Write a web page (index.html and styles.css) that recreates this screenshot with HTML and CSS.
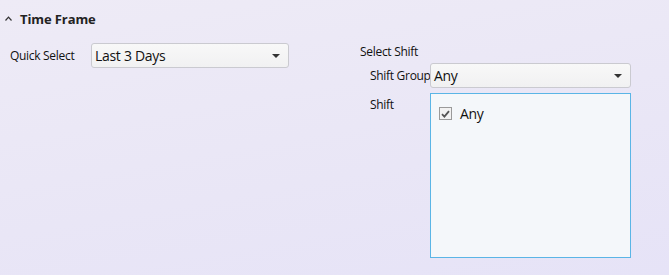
FILE: index.html
```html
<!DOCTYPE html>
<html>
  <head>
    <meta name="viewport" content="width=device-width, initial-scale=1.0" />
    <title>Time Frame</title>
    <link rel="stylesheet" href="styles.css">
  </head>

  <body>
    <div class="panel">
      <!-- header -->
      <div class="header">
        <span class="chevron">
          <svg width="7" height="5" viewBox="0 0 7 5"><path d="M0.5 4.5 L3.5 1.2 L6.5 4.5" fill="none" stroke="#333" stroke-width="1.2" /></svg>
        </span>
        <span class="title">Time Frame</span>
      </div>

      <div class="content">
        <!-- quick select -->
        <div class="left">
          <div class="field">
            <span class="label">Quick Select</span>
            <div class="combo wide">
              <span class="combo-text">Last 3 Days</span>
              <span class="arrow"></span>
            </div>
          </div>
        </div>

        <!-- shift -->
        <div class="right">
          <div class="group-title">Select Shift</div>
          <div class="field sub">
            <span class="label small">Shift Group</span>
            <div class="combo">
              <span class="combo-text">Any</span>
              <span class="arrow"></span>
            </div>
          </div>
          <div class="field sub top">
            <span class="label small shift-label">Shift</span>
            <div class="listbox">
              <div class="item">
                <span class="check">
                  <svg width="9" height="8" viewBox="0 0 9 8"><path d="M1 4.2 L3.4 6.6 L8 1.2" fill="none" stroke="#555" stroke-width="1.8" /></svg>
                </span>
                <span>Any</span>
              </div>
            </div>
          </div>
        </div>
      </div>
    </div>
  </body>
</html>
```

FILE: styles.css
```css
body {
  margin: 0;
  font-family: "Open Sans", "Noto Sans", sans-serif;
  font-size: 12px;
  color: #111;
  background: linear-gradient(170deg, #eeebf6 0%, #e9e6f6 60%, #e6e3f7 100%);
  width: 669px;
  height: 275px;
  overflow: hidden;
}

.panel {
  height: 275px;
}

.header {
  display: flex;
  align-items: center;
  height: 36px;
  padding-left: 5px;
  padding-top: 2px;
  box-sizing: border-box;
}

.chevron {
  display: flex;
  width: 15px;
  margin-top: -2px;
}

.title {
  font-size: 13px;
  font-weight: bold;
  color: #222;
  letter-spacing: -0.1px;
}

.content {
  display: flex;
}

.left {
  width: 360px;
  padding-left: 10px;
  padding-top: 7px;
  box-sizing: border-box;
}

.field {
  display: flex;
  align-items: center;
}

.field.top {
  align-items: flex-start;
  margin-top: 5px;
}

.label {
  width: 81px;
  letter-spacing: -0.3px;
  white-space: nowrap;
}

.label.small {
  width: 60px;
}

.shift-label {
  padding-top: 3px;
}

.combo {
  display: flex;
  align-items: center;
  justify-content: space-between;
  width: 201px;
  height: 25px;
  box-sizing: border-box;
  padding: 0 8px 0 3px;
  border: 1px solid #cacad0;
  border-radius: 3px;
  background: linear-gradient(#f8f8f8, #f1f1f2);
}

.combo.wide {
  width: 198px;
}

.combo-text {
  font-size: 14px;
  letter-spacing: -0.3px;
}

.arrow {
  width: 0;
  height: 0;
  border-left: 4px solid transparent;
  border-right: 4px solid transparent;
  border-top: 4px solid #333;
}

.right {
  padding-top: 8px;
}

.group-title {
  line-height: 16px;
  letter-spacing: -0.3px;
}

.sub {
  margin-left: 10px;
}

.sub:first-of-type {
  margin-top: 3px;
}

.group-title + .sub {
  margin-top: 3px;
}

.listbox {
  width: 201px;
  height: 165px;
  box-sizing: border-box;
  border: 1px solid #5ab5e6;
  background: #f4f7fa;
  padding: 10px 8px;
}

.item {
  display: flex;
  align-items: center;
  font-size: 14px;
  letter-spacing: -0.3px;
}

.check {
  display: flex;
  align-items: center;
  justify-content: center;
  width: 13px;
  height: 13px;
  box-sizing: border-box;
  border: 1px solid #9a9a9a;
  background: #f2f2f2;
  margin-right: 8px;
}
```
